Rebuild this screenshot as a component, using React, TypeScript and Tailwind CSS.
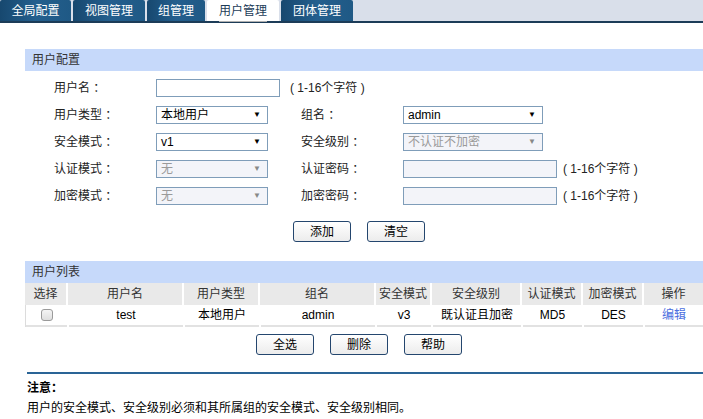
import React from 'react';

const FONT = { fontFamily: '"Liberation Sans", "Noto Sans CJK SC", sans-serif' };

const tabs = ['全局配置', '视图管理', '组管理', '用户管理', '团体管理'];
const tabWidths = ['w-[71px]', 'w-[72px]', 'w-[58px]', 'w-[72px]', 'w-[72px]'];

function Select({ value, disabled, w }: { value: string; disabled?: boolean; w: string }) {
  return (
    <div
      className={`${w} h-[18px] border border-[#7f9db9] flex items-center justify-between pl-[4px] pr-[6px] ${
        disabled ? 'bg-[#f3f4f9] text-[#9a9a9a]' : 'bg-white text-black'
      }`}
    >
      <span className="text-[12px] leading-none">{value}</span>
      <span className={`text-[8px] leading-none ${disabled ? 'text-[#888]' : 'text-black'}`}>▼</span>
    </div>
  );
}

function Input({ w, disabled }: { w: string; disabled?: boolean }) {
  return <div className={`${w} h-[18px] border border-[#7f9db9] ${disabled ? 'bg-[#f3f4f9]' : 'bg-white'}`} />;
}

function Btn({ label }: { label: string }) {
  return (
    <button className="w-[58px] h-[21px] border border-[#24466e] rounded-[3px] bg-gradient-to-b from-white to-[#ececec] text-[12px] text-black leading-none">
      {label}
    </button>
  );
}

const cols = [
  { t: '选择', w: 'w-[41px]' },
  { t: '用户名', w: 'w-[114px]' },
  { t: '用户类型', w: 'w-[74px]' },
  { t: '组名', w: 'w-[114px]' },
  { t: '安全模式', w: 'w-[54px]' },
  { t: '安全级别', w: 'w-[88px]' },
  { t: '认证模式', w: 'w-[59px]' },
  { t: '加密模式', w: 'w-[59px]' },
  { t: '操作', w: 'flex-1' },
];

const row = ['', 'test', '本地用户', 'admin', 'v3', '既认证且加密', 'MD5', 'DES', '编辑'];

export default function App() {
  return (
    <div className="w-[703px] h-[419px] bg-white text-[12px] text-[#222] overflow-hidden" style={FONT}>
      {/* Tab bar */}
      <div className="flex items-end h-[23px] bg-[#d9dfea] border-b-2 border-[#1c3c58] gap-[2px]">
        {tabs.map((t, i) => {
          const active = i === 3;
          return (
            <div
              key={t}
              className={`${tabWidths[i]} h-[21px] rounded-t-[2px] flex items-center justify-center text-[12px] ${
                active
                  ? 'bg-white text-[#1c3c58]'
                  : 'bg-gradient-to-r from-[#17486f] via-[#245f8e] to-[#1f5985] text-white'
              }`}
            >
              <span className={active ? 'border-b border-[#b0b0b0] pb-[1px] mt-[2px]' : ''}>{t}</span>
            </div>
          );
        })}
      </div>

      {/* 用户配置 */}
      <div className="ml-[25px] mt-[26px]">
        <div className="h-[22px] bg-[#c6d9fa] pl-[7px] flex items-center text-[12px] text-[#333]">用户配置</div>

        <div className="flex flex-col gap-[9px] mt-[8px]">
          <div className="flex items-center h-[18px]">
            <span className="w-[131px] pl-[29px]">用户名 ：</span>
            <Input w="w-[124px]" />
            <span className="ml-[10px]">( 1-16个字符 )</span>
          </div>
          <div className="flex items-center h-[18px]">
            <span className="w-[131px] pl-[29px]">用户类型 ：</span>
            <Select w="w-[112px]" value="本地用户" />
            <span className="w-[135px] pl-[33px]">组名 ：</span>
            <Select w="w-[140px]" value="admin" />
          </div>
          <div className="flex items-center h-[18px]">
            <span className="w-[131px] pl-[29px]">安全模式 ：</span>
            <Select w="w-[112px]" value="v1" />
            <span className="w-[135px] pl-[33px]">安全级别 ：</span>
            <Select w="w-[140px]" value="不认证不加密" disabled />
          </div>
          <div className="flex items-center h-[18px]">
            <span className="w-[131px] pl-[29px]">认证模式 ：</span>
            <Select w="w-[112px]" value="无" disabled />
            <span className="w-[135px] pl-[33px]">认证密码 ：</span>
            <Input w="w-[154px]" disabled />
            <span className="ml-[6px]">( 1-16个字符 )</span>
          </div>
          <div className="flex items-center h-[18px]">
            <span className="w-[131px] pl-[29px]">加密模式 ：</span>
            <Select w="w-[112px]" value="无" disabled />
            <span className="w-[135px] pl-[33px]">加密密码 ：</span>
            <Input w="w-[154px]" disabled />
            <span className="ml-[6px]">( 1-16个字符 )</span>
          </div>
        </div>

        <div className="flex gap-[16px] ml-[268px] mt-[16px]">
          <Btn label="添加" />
          <Btn label="清空" />
        </div>
      </div>

      {/* 用户列表 */}
      <div className="ml-[25px] mt-[19px]">
        <div className="h-[22px] bg-[#c6d9fa] pl-[7px] flex items-center text-[12px] text-[#333]">用户列表</div>
        <div className="flex gap-[2px]">
          {cols.map((c) => (
            <div key={c.t} className={`${c.w} h-[22px] bg-[#e9e9e9] flex items-center justify-center text-[#333]`}>
              {c.t}
            </div>
          ))}
        </div>
        <div className="flex gap-[2px] border-l border-[#dcdcdc]">
          {cols.map((c, i) => (
            <div key={c.t} className={`${c.w} h-[22px] border-b-2 border-[#e2e2e2] flex items-center justify-center`}>
              {i === 0 ? (
                <span className="w-[12px] h-[12px] rounded-[3px] border border-[#9a9a9a] bg-gradient-to-b from-[#f4f4f4] to-[#dedede]" />
              ) : i === 8 ? (
                <span className="text-[#4c6fe0]">{row[i]}</span>
              ) : (
                <span className="text-black">{row[i]}</span>
              )}
            </div>
          ))}
        </div>
        <div className="flex gap-[16px] ml-[231px] mt-[7px]">
          <Btn label="全选" />
          <Btn label="删除" />
          <Btn label="帮助" />
        </div>
      </div>

      {/* Notes */}
      <div className="ml-[27px] mt-[17px] border-t-2 border-[#2a6496] pt-[6px]">
        <div className="font-bold text-black leading-[16px]">注意：</div>
        <div className="text-black leading-[16px] mt-[4px]">用户的安全模式、安全级别必须和其所属组的安全模式、安全级别相同。</div>
      </div>
    </div>
  );
}
